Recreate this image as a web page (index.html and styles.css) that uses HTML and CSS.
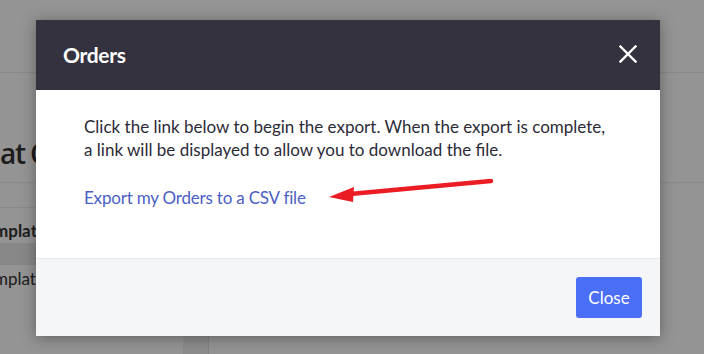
FILE: index.html
```html
<!DOCTYPE html>
<html>
<head>
<meta charset="utf-8">
<link rel="stylesheet" href="styles.css">
</head>
<body>
<div class="page">
  <div class="topbar"></div>
  <div class="heading">at C</div>
  <div class="tabs"></div>
  <div class="content">
    <div class="side">
      <div class="row bold">mplates</div>
      <div class="row hl"></div>
      <div class="row">mplates</div>
    </div>
    <div class="gutter"></div>
    <div class="main"></div>
  </div>
</div>
<div class="overlay">
  <div class="modal">
    <div class="modal-header">
      <h2 class="modal-title">Orders</h2>
      <button class="modal-x" aria-label="Close">
        <svg width="18" height="18" viewBox="0 0 18 18"><path d="M1.5 1.5 L16.5 16.5 M16.5 1.5 L1.5 16.5" stroke="#fff" stroke-width="2.4" stroke-linecap="square" fill="none"/></svg>
      </button>
    </div>
    <div class="modal-body">
      <p class="msg">Click the link below to begin the export. When the export is complete,<br>a link will be displayed to allow you to download the file.</p>
      <a class="export-link" href="#">Export my Orders to a CSV file</a>
    </div>
    <div class="modal-footer">
      <button class="btn-close">Close</button>
    </div>
  </div>
  <svg class="arrow" width="704" height="354" viewBox="0 0 704 354">
    <path d="M491 181 L350 194" stroke="#ec1c24" stroke-width="4.5" stroke-linecap="round" fill="none"/>
    <path d="M329 197 L354 187 L353 202 Z" fill="#ec1c24"/>
  </svg>
</div>
</body>
</html>
```
FILE: styles.css
```css
html, body {
  margin: 0;
  padding: 0;
}
body {
  width: 704px;
  height: 354px;
  overflow: hidden;
  font-family: Lato, "Liberation Sans", sans-serif;
  background: #fff;
  position: relative;
}
.page {
  width: 704px;
  height: 354px;
}
.topbar {
  height: 72px;
  border-bottom: 1px solid #ececec;
}
.heading {
  height: 110px;
  font-family: "Open Sans", sans-serif;
  font-size: 28px;
  font-weight: 600;
  color: #333;
  line-height: 1;
  padding-top: 66px;
  box-sizing: border-box;
  white-space: nowrap;
  letter-spacing: -1.2px;
  word-spacing: -1px;
  border-bottom: 1px solid #ececec;
}
.tabs {
  height: 24px;
  border-bottom: 1px solid #ececec;
  width: 200px;
}
.content {
  display: flex;
  height: 150px;
}
.side {
  width: 183px;
  padding-top: 12px;
  font-size: 17px;
  color: #333;
}
.row {
  height: 22px;
  line-height: 22px;
  margin-left: -6px;
}
.row.bold { font-weight: 700; }
.row.hl { background: #e8e8e8; margin-left: 0; margin-top: 1px; }
.row:last-child { margin-top: 3px; }
.gutter {
  width: 25px;
  background: #f2f2f2;
  border-right: 1px solid #e2e2e2;
}
.main { flex: 1; }

.overlay {
  position: absolute;
  left: 0;
  top: 0;
  width: 704px;
  height: 354px;
  background: rgba(0, 0, 0, 0.42);
  padding: 20px 0 0 36px;
  box-sizing: border-box;
}
.modal {
  width: 624px;
  height: 316px;
  background: #fff;
  display: flex;
  flex-direction: column;
  box-shadow: 0 2px 14px rgba(0, 0, 0, 0.35);
}
.modal-header {
  height: 70px;
  background: #34323f;
  display: flex;
  align-items: center;
  justify-content: space-between;
  padding: 0 23px 0 27px;
}
.modal-title {
  margin: 0;
  color: #fff;
  font-size: 21px;
  font-weight: 700;
  letter-spacing: -0.3px;
  position: relative;
  top: -1px;
}
.modal-x {
  background: none;
  border: 0;
  padding: 0;
  width: 18px;
  height: 18px;
  display: flex;
  cursor: pointer;
  position: relative;
  top: -1px;
}
.modal-body {
  flex: 1;
  padding: 25px 48px 0;
}
.msg {
  margin: 0;
  font-size: 17px;
  line-height: 23px;
  color: #2d2b38;
}
.export-link {
  display: inline-block;
  margin-top: 25px;
  font-size: 17px;
  line-height: 23px;
  letter-spacing: -0.2px;
  color: #4b5fc4;
  text-decoration: none;
}
.modal-footer {
  height: 77px;
  border-top: 1px solid #e5e7ea;
  background: #f5f6f8;
  display: flex;
  align-items: center;
  justify-content: flex-end;
  padding-right: 18px;
}
.btn-close {
  width: 66px;
  height: 41px;
  border: 0;
  border-radius: 3px;
  background: #4b6ef7;
  color: #fff;
  font-family: inherit;
  font-size: 17px;
  padding: 0;
}
.arrow {
  position: absolute;
  left: 0;
  top: 0;
}
```
